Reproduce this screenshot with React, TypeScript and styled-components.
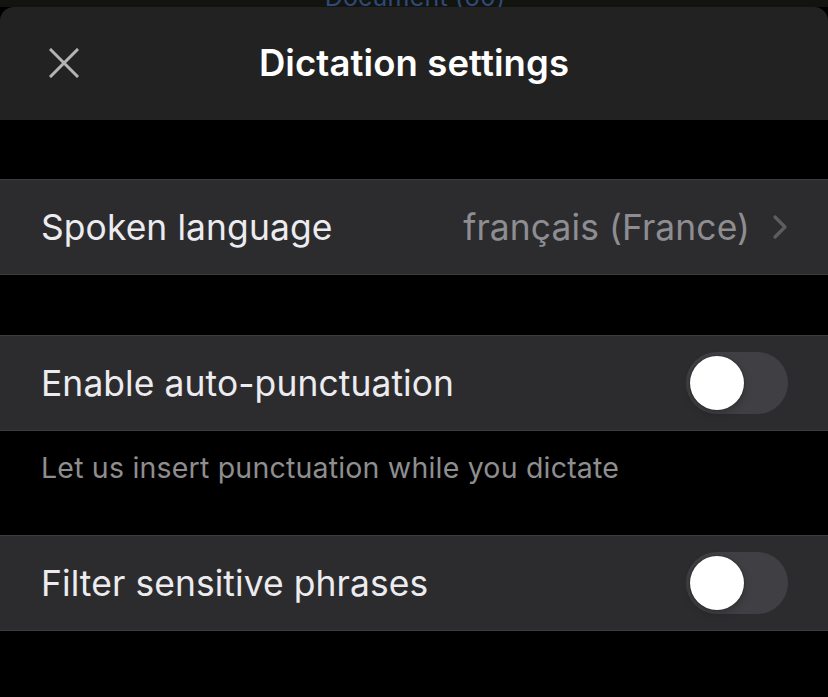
import React from "react";
import styled, { createGlobalStyle } from "styled-components";

const GlobalStyle = createGlobalStyle`
  html, body {
    margin: 0;
    padding: 0;
    background: #000;
  }
  body {
    font-family: Inter, "Noto Sans", "Liberation Sans", sans-serif;
    -webkit-font-smoothing: antialiased;
  }
`;

const Screen = styled.div`
  width: 828px;
  height: 697px;
  overflow: hidden;
  background: #000;
  display: flex;
  flex-direction: column;
`;

/* Sliver of the screen underneath the sheet */
const BehindStrip = styled.div`
  height: 7px;
  flex: none;
  background: #131410;
  overflow: hidden;
  display: flex;
  justify-content: center;
  align-items: flex-end;
`;

const BehindTitle = styled.span`
  font-size: 25px;
  line-height: 1;
  color: #2d4a77;
  margin-bottom: -3px;
  margin-left: 2px;
  letter-spacing: 0.2px;
`;

const Sheet = styled.div`
  flex: 1;
  display: flex;
  flex-direction: column;
  background: #000;
  border-radius: 14px 14px 0 0;
  overflow: hidden;
`;

const Header = styled.header`
  height: 113px;
  flex: none;
  background: #222223;
  display: grid;
  grid-template-columns: 120px 1fr 120px;
  align-items: center;
`;

const CloseButton = styled.button`
  justify-self: start;
  margin-left: 48px;
  margin-top: -2px;
  width: 32px;
  height: 32px;
  padding: 0;
  border: 0;
  background: transparent;
  display: flex;
  align-items: center;
  justify-content: center;
`;

const Title = styled.h1`
  margin: 0;
  margin-top: -2px;
  text-align: center;
  font-size: 36.5px;
  font-weight: 600;
  color: #fff;
  letter-spacing: 0.1px;
`;

const Spacer = styled.div<{ $h: number }>`
  height: ${(p) => p.$h}px;
  flex: none;
`;

const Row = styled.div`
  height: 94px;
  flex: none;
  box-sizing: content-box;
  background: #2c2c2e;
  border-top: 1px solid #3d3d40;
  border-bottom: 1px solid #3d3d40;
  display: flex;
  align-items: center;
  padding: 0 40px 0 41px;
`;

const Label = styled.span`
  flex: 1;
  font-size: 35.4px;
  color: #ececf0;
  letter-spacing: 0.1px;
`;

const Value = styled.span`
  font-size: 35.4px;
  color: #8e8e92;
  margin-right: 22px;
  letter-spacing: 0.1px;
`;

const Footnote = styled.p`
  margin: 0;
  height: 104px;
  flex: none;
  padding: 19px 41px 0;
  box-sizing: border-box;
  font-size: 28.5px;
  color: #8e8e8f;
  letter-spacing: 0.2px;
`;

const Track = styled.div<{ $on: boolean }>`
  width: 102px;
  height: 62px;
  border-radius: 31px;
  background: ${(p) => (p.$on ? "#34c759" : "#404044")};
  display: flex;
  align-items: center;
  padding: 0 4px;
  box-sizing: border-box;
  justify-content: ${(p) => (p.$on ? "flex-end" : "flex-start")};
`;

const Knob = styled.div`
  width: 54px;
  height: 54px;
  border-radius: 50%;
  background: #fff;
  box-shadow: 0 0 0 1px rgba(0, 0, 0, 0.12), 0 3px 8px rgba(0, 0, 0, 0.25);
`;

function Toggle({ on }: { on: boolean }) {
  return (
    <Track $on={on} role="switch" aria-checked={on}>
      <Knob />
    </Track>
  );
}

function CloseIcon() {
  return (
    <svg width="30" height="30" viewBox="0 0 30 30" fill="none">
      <path d="M2 2 L28 28 M28 2 L2 28" stroke="#b4b4b6" strokeWidth="3" strokeLinecap="square" />
    </svg>
  );
}

function Chevron() {
  return (
    <svg width="16" height="26" viewBox="0 0 16 26" fill="none">
      <path d="M3 3 L13 13 L3 23" stroke="#5d5d61" strokeWidth="3.2" strokeLinecap="round" strokeLinejoin="round" />
    </svg>
  );
}

export default function App() {
  return (
    <>
      <GlobalStyle />
      <Screen>
        <BehindStrip>
          <BehindTitle>Document (60)</BehindTitle>
        </BehindStrip>
        <Sheet>
          <Header>
            <CloseButton aria-label="Close">
              <CloseIcon />
            </CloseButton>
            <Title>Dictation settings</Title>
            <div />
          </Header>
          <Spacer $h={59} />
          <Row>
            <Label>Spoken language</Label>
            <Value>français (France)</Value>
            <Chevron />
          </Row>
          <Spacer $h={60} />
          <Row>
            <Label>Enable auto-punctuation</Label>
            <Toggle on={false} />
          </Row>
          <Footnote>Let us insert punctuation while you dictate</Footnote>
          <Row>
            <Label>Filter sensitive phrases</Label>
            <Toggle on={false} />
          </Row>
        </Sheet>
      </Screen>
    </>
  );
}
